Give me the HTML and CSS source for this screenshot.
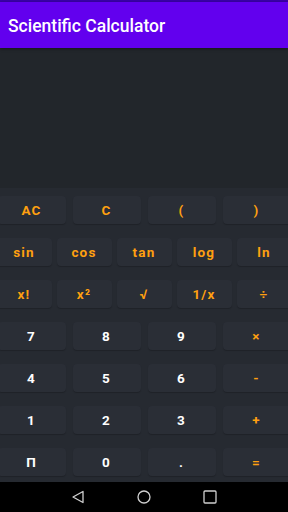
FILE: index.html
```html
<!DOCTYPE html>
<html>
<head>
<meta charset="utf-8">
<link rel="stylesheet" href="styles.css">
</head>
<body>
<div class="screen">
  <div class="statusbar"></div>
  <header class="appbar"><h1 class="title">Scientific Calculator</h1></header>
  <div class="display"></div>
  <main class="keypad">
    <div class="row row4">
      <button class="key fn">AC</button>
      <button class="key fn">C</button>
      <button class="key fn">(</button>
      <button class="key fn">)</button>
    </div>
    <div class="row row5">
      <button class="key fn">sin</button>
      <button class="key fn">cos</button>
      <button class="key fn">tan</button>
      <button class="key fn">log</button>
      <button class="key fn">ln</button>
    </div>
    <div class="row row5">
      <button class="key fn">x!</button>
      <button class="key fn">x²</button>
      <button class="key fn">√</button>
      <button class="key fn">1/x</button>
      <button class="key fn">÷</button>
    </div>
    <div class="row row4">
      <button class="key num">7</button>
      <button class="key num">8</button>
      <button class="key num">9</button>
      <button class="key fn">×</button>
    </div>
    <div class="row row4">
      <button class="key num">4</button>
      <button class="key num">5</button>
      <button class="key num">6</button>
      <button class="key fn">-</button>
    </div>
    <div class="row row4">
      <button class="key num">1</button>
      <button class="key num">2</button>
      <button class="key num">3</button>
      <button class="key fn">+</button>
    </div>
    <div class="row row4">
      <button class="key num">Π</button>
      <button class="key num">0</button>
      <button class="key num">.</button>
      <button class="key fn">=</button>
    </div>
  </main>
  <nav class="navbar">
    <svg class="nav-icon" width="14" height="14" viewBox="0 0 14 14"><path d="M12 1.5 L2 7 L12 12.5 Z" fill="none" stroke="#d0d0d0" stroke-width="1.3" stroke-linejoin="round"/></svg>
    <svg class="nav-icon" width="14" height="14" viewBox="0 0 14 14"><circle cx="7" cy="7" r="6" fill="none" stroke="#d0d0d0" stroke-width="1.3"/></svg>
    <svg class="nav-icon" width="14" height="14" viewBox="0 0 14 14"><rect x="1" y="1" width="12" height="12" rx="1" fill="none" stroke="#d0d0d0" stroke-width="1.3"/></svg>
  </nav>
</div>
</body>
</html>
```
FILE: styles.css
```css
html, body {
  margin: 0;
  padding: 0;
  background: #000;
}
body {
  font-family: Roboto, "Liberation Sans", sans-serif;
}
.screen {
  width: 288px;
  height: 512px;
  display: flex;
  flex-direction: column;
  overflow: hidden;
}
.statusbar {
  height: 2px;
  background: #3a00a8;
}
.appbar {
  height: 46px;
  background: #6200ee;
  display: flex;
  align-items: center;
  padding: 0 8px;
  box-shadow: 0 1px 3px rgba(0,0,0,0.4);
  position: relative;
  z-index: 1;
}
.title {
  margin: 0;
  color: #fff;
  font-size: 17.5px;
  font-weight: 500;
  padding-top: 1px;
}
.display {
  height: 140px;
  background: #22262b;
}
.keypad {
  height: 294px;
  box-sizing: border-box;
  background: #262a31;
  padding-top: 8px;
  display: flex;
  flex-direction: column;
  gap: 14px;
}
.row {
  display: flex;
  justify-content: center;
  height: 28px;
}
.row4 {
  gap: 7px;
  margin: 0 -2.5px 0 -2.5px;
}
.row4 .key {
  flex: 0 0 68px;
}
.row5 {
  gap: 5px;
  margin: 0 -3.5px;
}
.row5 .key {
  flex: 0 0 55px;
}
.key {
  border: none;
  margin: 0;
  padding: 0;
  height: 28px;
  border-radius: 4px;
  background: #2a2e36;
  box-shadow: 0 1px 1px rgba(0,0,0,0.2);
  font-family: Roboto, "Liberation Sans", sans-serif;
  font-weight: 700;
  font-size: 13.5px;
  letter-spacing: 1.2px;
  display: flex;
  align-items: center;
  justify-content: center;
}
.fn {
  color: #ffa010;
}
.num {
  color: #ffffff;
}
.navbar {
  height: 30px;
  background: #000;
  display: flex;
  align-items: center;
  justify-content: center;
  gap: 52px;
}
.nav-icon {
  display: block;
}
```
